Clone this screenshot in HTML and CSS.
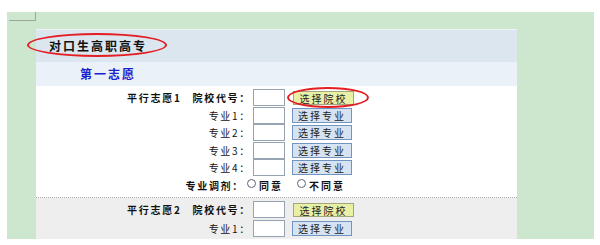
FILE: index.html
```html
<!DOCTYPE html>
<html lang="zh-CN">
<head>
  <meta charset="UTF-8"/>
  <meta name="viewport" content="width=device-width, initial-scale=1.0"/>
  <title>对口生高职高专</title>
  <link rel="stylesheet" href="styles.css">
</head>
<body>

  <div class="page">
    <div class="corner"></div>

    <div class="panel">
      <div class="panel-title">
        <span class="mark mark-title"></span>
        对口生高职高专
      </div>
      <div class="choice-title">第一志愿</div>

      <!-- 平行志愿1 -->
      <div class="group">
        <div class="label strong">平行志愿1<span class="sep"></span>院校代号：</div>
        <input class="code" type="text">
        <div class="btn-wrap">
          <button class="btn btn-school">选择院校</button>
          <span class="mark mark-btn"></span>
        </div>

        <div class="label">专业1：</div>
        <input class="code" type="text">
        <button class="btn btn-major">选择专业</button>

        <div class="label">专业2：</div>
        <input class="code" type="text">
        <button class="btn btn-major">选择专业</button>

        <div class="label">专业3：</div>
        <input class="code" type="text">
        <button class="btn btn-major">选择专业</button>

        <div class="label">专业4：</div>
        <input class="code" type="text">
        <button class="btn btn-major">选择专业</button>

        <div class="label label-adjust strong">专业调剂：</div>
        <div class="options">
          <span class="radio"></span><span class="opt">同意</span>
          <span class="radio"></span><span class="opt">不同意</span>
        </div>
      </div>

      <!-- 平行志愿2 -->
      <div class="group group-alt">
        <div class="label strong">平行志愿2<span class="sep"></span>院校代号：</div>
        <input class="code" type="text">
        <div class="btn-wrap">
          <button class="btn btn-school">选择院校</button>
        </div>

        <div class="label">专业1：</div>
        <input class="code" type="text">
        <button class="btn btn-major">选择专业</button>

        <div class="label">专业2：</div>
        <input class="code" type="text">
        <button class="btn btn-major">选择专业</button>
      </div>
    </div>
  </div>

</body>
</html>
```

FILE: styles.css
```css
body {
  margin: 0;
  background: #fff;
  font-family: "Noto Sans CJK SC", "DejaVu Sans", sans-serif;
  color: #111;
}

.page {
  margin: 12px 6px 0 7px;
  height: 227px;
  background: #cde7cf;
  overflow: hidden;
}

.corner {
  width: 26px;
  height: 8px;
  margin-left: 2px;
  border-right: 1px solid #9aa79b;
  border-bottom: 1px solid #9aa79b;
}

.panel {
  width: 481px;
  margin: 8px 0 0 29px;
  background: #fff;
}

.panel-title {
  position: relative;
  height: 33px;
  line-height: 31px;
  padding-left: 13px;
  background: #dce6ef;
  border-top: 1px solid #eef3f8;
  box-sizing: border-box;
  font-size: 12px;
  font-weight: bold;
  letter-spacing: 2px;
}

.choice-title {
  height: 24px;
  line-height: 23px;
  padding-left: 44px;
  background: #eaf1f8;
  color: #1a22d0;
  font-size: 12px;
  font-weight: bold;
  letter-spacing: 2px;
}

.group {
  display: grid;
  grid-template-columns: 217px 39px 62px;
  grid-auto-rows: 17.5px;
  align-items: center;
  padding: 3px 0 3px;
  border-bottom: 1px dotted #a8a8a8;
}

.group-alt {
  grid-auto-rows: 19px;
  background: #eeeeee;
  padding-top: 2px;
  border-bottom: none;
}

.label {
  text-align: right;
  padding-right: 2px;
  font-size: 10px;
  letter-spacing: 1.7px;
  white-space: nowrap;
}

.label-adjust {
  padding-right: 9px;
}

.strong {
  font-weight: bold;
}

.sep {
  display: inline-block;
  width: 11px;
}

.code {
  width: 32px;
  height: 17px;
  margin: 0;
  padding: 0;
  box-sizing: border-box;
  border: 1px solid #96a3b2;
  background: #fff;
}

.btn {
  height: 15px;
  margin: 0;
  padding: 0;
  box-sizing: border-box;
  font-family: "Noto Sans CJK SC", sans-serif;
  font-size: 10px;
  line-height: 13px;
  letter-spacing: 2px;
  color: #222;
  cursor: pointer;
}

.btn-major {
  width: 60px;
  background: #d6e3f2;
  border: 1px solid #7195c0;
}

.btn-wrap {
  position: relative;
  display: flex;
  align-items: center;
}

.btn-school {
  width: 62px;
  height: 14px;
  margin-left: 1px;
  background: #e9f0a6;
  border: 1px solid #a3a77a;
}

.options {
  grid-column: 2 / 4;
  margin-left: -6px;
  display: flex;
  align-items: center;
  font-size: 10px;
  font-weight: bold;
  letter-spacing: 2px;
  white-space: nowrap;
}

.radio {
  flex: none;
  width: 7px;
  height: 7px;
  border: 1px solid #5d6675;
  border-radius: 50%;
  margin-right: 3px;
  margin-top: -3px;
}

.opt {
  margin-right: 14px;
}

.mark {
  position: absolute;
  border: 2px solid #e31e24;
  border-radius: 50%;
  pointer-events: none;
}

.mark-title {
  left: -9px;
  top: 3px;
  width: 136px;
  height: 20px;
}

.mark-btn {
  left: -5px;
  top: -4px;
  width: 78px;
  height: 17px;
}
```
